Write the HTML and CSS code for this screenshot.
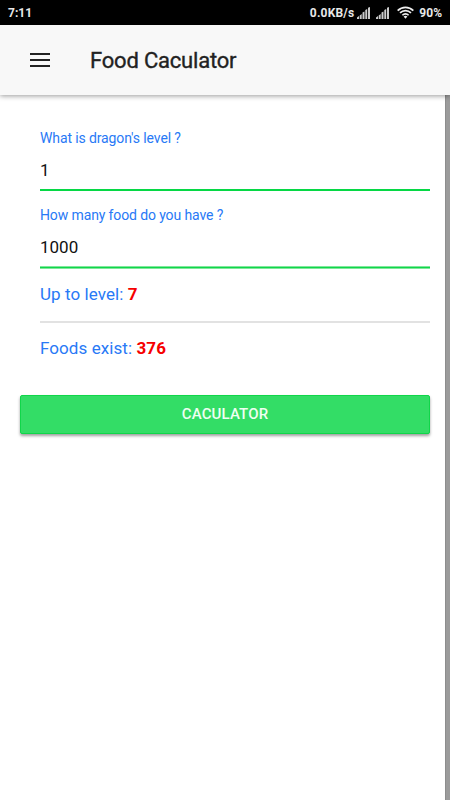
FILE: index.html
```html
<!DOCTYPE html>
<html lang="en">
<head>
<meta charset="utf-8">
<title>Food Caculator</title>
<link rel="stylesheet" href="styles.css">
</head>
<body>
<div class="status">
  <span class="clock">7:11</span>
  <span class="speed">0.0KB/s</span>
  <svg class="signal" width="13" height="12" viewBox="0 0 13 12" fill="#ccc"><path d="M0 10.500L2 9v3H0zM2.700 8.500l2-1.500v5h-2zM5.500 5.500l2-1V12h-2zM8.300 3l1.900-1v10H8.300zM11 .8l2-.8v12h-2z"/></svg>
  <svg class="signal second" width="13" height="12" viewBox="0 0 13 12" fill="#ccc"><path d="M0 10.500L2 9v3H0zM2.700 8.500l2-1.500v5h-2zM5.500 5.500l2-1V12h-2zM8.300 3l1.900-1v10H8.300zM11 .8l2-.8v12h-2z"/></svg>
  <svg class="wifi" width="17" height="13" viewBox="0 0 18 13" fill="none" stroke="#eee" stroke-width="1.800"><path d="M.7 4.500C5.300-.2 12.700-.2 17.300 4.500M3.200 7c3.300-3.300 8.300-3.300 11.600 0M5.700 9.400c1.900-1.900 4.700-1.900 6.600 0"/><path d="M9 13l-2-2.300q2-1.500 4 0z" fill="#eee" stroke="none"/></svg>
  <span class="battery">90%</span>
</div>
<header class="toolbar">
  <svg class="menu" width="20" height="14" viewBox="0 0 20 14" fill="#222"><path d="M0 0h20v2H0zM0 6h20v2H0zM0 12h20v2H0z"/></svg>
  <h1 class="title">Food Caculator</h1>
</header>
<div class="body">
  <main class="content">
    <div class="form">
      <div class="field">
        <div class="label">What is dragon's level ?</div>
        <div class="value">1</div>
      </div>
      <div class="field last">
        <div class="label">How many food do you have ?</div>
        <div class="value">1000</div>
      </div>
      <div class="result ruled">Up to level: <b>7</b></div>
      <div class="result">Foods exist: <b>376</b></div>
    </div>
    <button class="submit">CACULATOR</button>
  </main>
  <div class="edge"></div>
</div>
</body>
</html>
```
FILE: styles.css
```css
* { box-sizing: border-box; }
body {
  margin: 0;
  width: 450px;
  height: 800px;
  display: flex;
  flex-direction: column;
  overflow: hidden;
  background: #fff;
  font-family: Roboto, sans-serif;
}
.status {
  height: 25px;
  flex: none;
  display: flex;
  align-items: center;
  padding: 0 8px;
  background: #000;
  color: #e8e8e8;
  font-size: 12px;
  font-weight: 700;
  white-space: nowrap;
}
.clock { flex: 1; }
.speed { letter-spacing: .2px; margin-right: 3px; }
.second { margin-left: 6px; }
.wifi { margin: 0 5px 0 8px; }
.toolbar {
  position: relative;
  z-index: 1;
  height: 70px;
  flex: none;
  display: flex;
  align-items: center;
  padding-left: 30px;
  background: #f8f8f8;
  box-shadow: 0 1px 5px rgba(0, 0, 0, .4);
}
.title {
  margin: 0 0 0 40px;
  font-size: 22px;
  font-weight: 400;
  letter-spacing: -.2px;
  -webkit-text-stroke: .35px #222;
  color: #222;
}
.body { flex: 1; display: flex; }
.content { flex: 1; padding: 29px 15px 0 20px; }
.edge {
  width: 5px;
  background: #9b9b9b;
  border-left: 1px solid #8d8d8d;
}
.form { padding-left: 20px; }
.field {
  height: 67px;
  border-bottom: 2px solid #06d845;
  margin-bottom: 11px;
}
.label {
  height: 27px;
  line-height: 28px;
  font-size: 14px;
  letter-spacing: -.12px;
  color: #2879f6;
}
.value {
  line-height: 38px;
  font-size: 17px;
  color: #111;
}
.last {
  height: 66px;
  margin-bottom: 1px;
  border-bottom: 1px solid #10d64a;
  box-shadow: 0 1px #7fe79b, inset 0 -1px #7fe79b;
}
.last .label { height: 26px; line-height: 26px; }
.result {
  height: 54px;
  line-height: 51px;
  font-size: 17px;
  letter-spacing: .08px;
  color: #2879f6;
}
.ruled { border-bottom: 2px solid #e2e2e2; }
.result b { color: #f60000; }
.submit {
  display: block;
  width: 100%;
  height: 39px;
  margin-top: 18px;
  padding: 0 0 2px;
  border: 1px solid #10d64a;
  border-radius: 2px;
  background: #33dd66;
  color: #eefff2;
  font: 500 15px Roboto, sans-serif;
  letter-spacing: .15px;
  box-shadow: 0 2px 3px rgba(0, 0, 0, .38);
}
```
